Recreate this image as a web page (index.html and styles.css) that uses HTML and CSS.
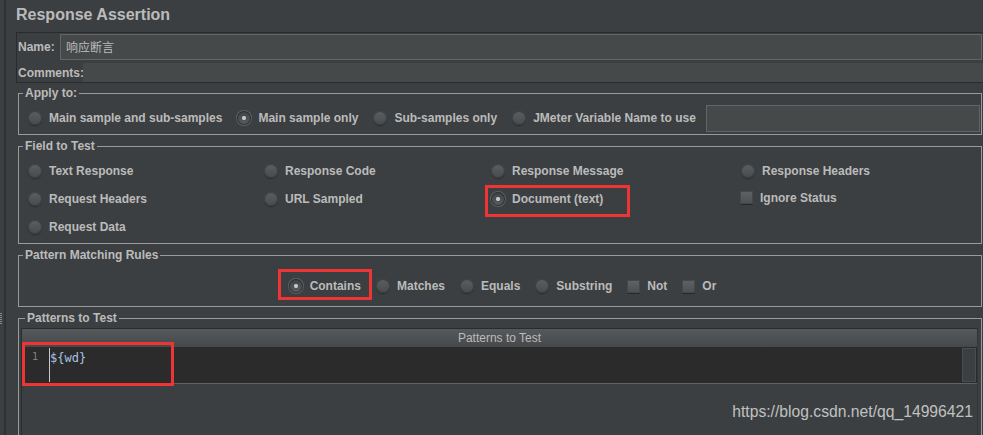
FILE: index.html
```html
<!DOCTYPE html>
<html lang="en">
<head>
<meta charset="utf-8">
<title>Response Assertion</title>
<link rel="stylesheet" href="styles.css">
</head>
<body>
<div class="app">
  <div class="divider"><span class="grip"></span></div>
  <div class="main">
    <div class="title">Response Assertion</div>

    <div class="name-panel">
      <div class="np-row name-row">
        <span class="lbl lbl-name">Name:</span>
        <div class="input name-input">响应断言</div>
      </div>
      <div class="np-row comments-row">
        <span class="lbl lbl-comments">Comments:</span>
        <div class="input comments-input"></div>
      </div>
    </div>

    <fieldset class="group apply">
      <legend>Apply to:</legend>
      <div class="apply-row">
        <span class="opt"><span class="radio"></span>Main sample and sub-samples</span>
        <span class="opt"><span class="radio on"></span>Main sample only</span>
        <span class="opt"><span class="radio"></span>Sub-samples only</span>
        <span class="opt"><span class="radio"></span>JMeter Variable Name to use</span>
        <div class="input var-input"></div>
      </div>
    </fieldset>

    <fieldset class="group field">
      <legend>Field to Test</legend>
      <div class="field-grid">
        <span class="opt"><span class="radio"></span>Text Response</span>
        <span class="opt"><span class="radio"></span>Response Code</span>
        <span class="opt"><span class="radio"></span>Response Message</span>
        <span class="opt"><span class="radio"></span>Response Headers</span>
        <span class="opt"><span class="radio"></span>Request Headers</span>
        <span class="opt"><span class="radio"></span>URL Sampled</span>
        <span class="opt"><span class="radio on"></span>Document (text)</span>
        <span class="opt opt-check"><span class="check"></span>Ignore Status</span>
        <span class="opt"><span class="radio"></span>Request Data</span>
      </div>
    </fieldset>

    <fieldset class="group rules">
      <legend>Pattern Matching Rules</legend>
      <div class="rules-row">
        <span class="opt"><span class="radio on"></span>Contains</span>
        <span class="opt"><span class="radio"></span>Matches</span>
        <span class="opt"><span class="radio"></span>Equals</span>
        <span class="opt"><span class="radio"></span>Substring</span>
        <span class="opt"><span class="check"></span>Not</span>
        <span class="opt"><span class="check"></span>Or</span>
      </div>
    </fieldset>

    <fieldset class="group patterns">
      <legend>Patterns to Test</legend>
      <div class="scrollpane">
        <div class="table-header">Patterns to Test</div>
        <div class="editor">
          <div class="gutter">1</div>
          <div class="code"><span class="caret"></span>${wd}</div>
          <div class="vscroll"></div>
        </div>
      </div>
    </fieldset>
  </div>

  <div class="mark mark-doc"></div>
  <div class="mark mark-contains"></div>
  <div class="mark mark-pattern"></div>
  <div class="watermark">https://blog.csdn.net/qq_14996421</div>
</div>
</body>
</html>
```

FILE: styles.css
```css
html, body {
  margin: 0;
  padding: 0;
  background: #3c3f41;
}

body {
  font-family: "Liberation Sans", Arial, "Noto Sans CJK SC", sans-serif;
  font-size: 12px;
  color: #bbbbbb;
}

.app {
  position: relative;
  display: flex;
  width: 983px;
  height: 435px;
  overflow: hidden;
  background: #3c3f41;
}

.divider {
  width: 4px;
  flex: none;
  border-right: 2px solid #2f3133;
  position: relative;
}

.grip {
  position: absolute;
  left: 0;
  top: 313px;
  width: 2px;
  height: 12px;
  background: repeating-linear-gradient(#8a8a8a 0 1px, transparent 1px 2px);
}

.main {
  flex: 1;
  padding-left: 10px;
  min-width: 0;
}

.title {
  height: 32px;
  box-sizing: border-box;
  padding-top: 5px;
  line-height: 20px;
  font-size: 16px;
  font-weight: bold;
  color: #bbbbbb;
}

/* Name / Comments panel */
.name-panel {
  border: 1px solid #2b2b2b;
  border-right: none;
  height: 49px;
}

.np-row {
  display: flex;
  align-items: center;
}

.name-row {
  height: 26px;
  padding-top: 1px;
}

.comments-row {
  height: 19px;
  margin-top: 3px;
}

.lbl {
  font-weight: bold;
  white-space: nowrap;
  padding-left: 1px;
  box-sizing: border-box;
  flex: none;
}

.lbl-name { width: 43px; }
.lbl-comments { width: 66px; }

.input {
  background: #45494a;
  box-sizing: border-box;
}

.name-input {
  flex: 1;
  height: 26px;
  border: 1px solid #646464;
  margin-right: 1px;
  padding-left: 5px;
  line-height: 24px;
  font-family: "Noto Sans CJK SC", sans-serif;
  font-size: 12px;
  color: #bbbbbb;
}

.comments-input {
  flex: 1;
  height: 19px;
}

/* titled groups */
.group {
  margin: 5px 1px 0 2px;
  padding: 0;
  border: 1px solid #9a9a9a;
  min-width: 0;
}

.group legend {
  margin-left: 4px;
  padding: 0 2px;
  line-height: 13px;
  font-weight: bold;
  color: #bbbbbb;
}

.group.apply { margin-top: 4px; }

.opt {
  display: flex;
  align-items: center;
  gap: 7px;
  font-weight: bold;
  white-space: nowrap;
}

.radio {
  width: 14px;
  height: 14px;
  border-radius: 50%;
  flex: none;
  box-sizing: border-box;
  background: linear-gradient(#5c5f61, #484a4c);
  box-shadow: inset 0 0 0 1px #3d3f41, 0 1px 1px rgba(0, 0, 0, 0.35);
}

.radio.on {
  background:
    radial-gradient(circle at 50% 50%, #c4c4c4 0 1.8px, transparent 2.4px),
    linear-gradient(#3f4143, #5a5d5f);
  box-shadow: inset 0 0 0 1px #2e3032, 0 0 0 1px #5d6062;
}

.check {
  width: 13px;
  height: 13px;
  flex: none;
  box-sizing: border-box;
  border-radius: 1px;
  background: linear-gradient(#606365, #4c4e50);
  box-shadow: inset 0 0 0 1px #45484a, 0 1px 0 #26282a;
}

/* Apply to */
.apply-row {
  display: flex;
  align-items: center;
  gap: 15px;
  height: 26px;
  padding: 5px 1px 3px 9px;
}

.apply-row .opt { flex: none; }

.var-input {
  flex: 1;
  min-width: 0;
  height: 27px;
  margin-left: -5px;
  border: 1px solid #646464;
}

/* Field to test */
.field-grid {
  display: grid;
  grid-template-columns: 236px 227px 250px 1fr;
  grid-auto-rows: 28px;
  align-items: center;
  padding: 4px 0 2px 9px;
}

.opt-check {
  margin-left: -1px;
  margin-top: -3px;
}

/* Pattern matching rules */
.rules-row {
  display: flex;
  justify-content: center;
  align-items: center;
  gap: 15px;
  height: 24px;
  padding: 12px 0 8px 5px;
}

/* Patterns to test */
.patterns {
  padding: 3px 3px 0 2px;
}

.scrollpane {
  height: 140px;
  border: 1px solid #2b2b2b;
  border-bottom: none;
  border-right-color: #333537;
  background: #3c3f41;
}

.table-header {
  height: 18px;
  line-height: 18px;
  text-align: center;
  background: linear-gradient(#56595b, #46494b);
  color: #bbbbbb;
  font-size: 12px;
}

.editor {
  display: flex;
  height: 36px;
  background: #2b2b2b;
  border-bottom: 1px solid #5e6264;
}

.gutter {
  width: 27px;
  flex: none;
  box-sizing: border-box;
  padding: 4px 0 0 10px;
  font-family: "DejaVu Sans Mono", monospace;
  font-size: 10px;
  line-height: 12px;
  color: #7f8385;
}

.code {
  flex: 1;
  display: flex;
  align-items: flex-start;
  font-family: "DejaVu Sans Mono", "Liberation Mono", monospace;
  font-size: 12px;
  line-height: 16px;
  padding-top: 3px;
  color: #a9c3e6;
}

.caret {
  width: 1px;
  height: 34px;
  margin-top: -2px;
  margin-right: 0;
  background: #c8c8c8;
  flex: none;
}

.vscroll {
  width: 14px;
  flex: none;
  margin: 1px 1px 1px 0;
  box-sizing: border-box;
  background: #3c3f41;
  border: 1px solid #4a4d4f;
}

/* annotations */
.mark {
  position: absolute;
  border: 3px solid #ee3434;
  box-sizing: border-box;
  pointer-events: none;
}

.mark-doc { left: 485px; top: 185px; width: 145px; height: 32px; }
.mark-contains { left: 278px; top: 269px; width: 94px; height: 31px; }
.mark-pattern { left: 22px; top: 342px; width: 152px; height: 44px; }

.watermark {
  position: absolute;
  right: 10px;
  top: 403px;
  font-family: "Liberation Sans", Arial, sans-serif;
  font-size: 15.7px;
  color: #cfcfcf;
  opacity: 0.9;
  white-space: nowrap;
}
```
